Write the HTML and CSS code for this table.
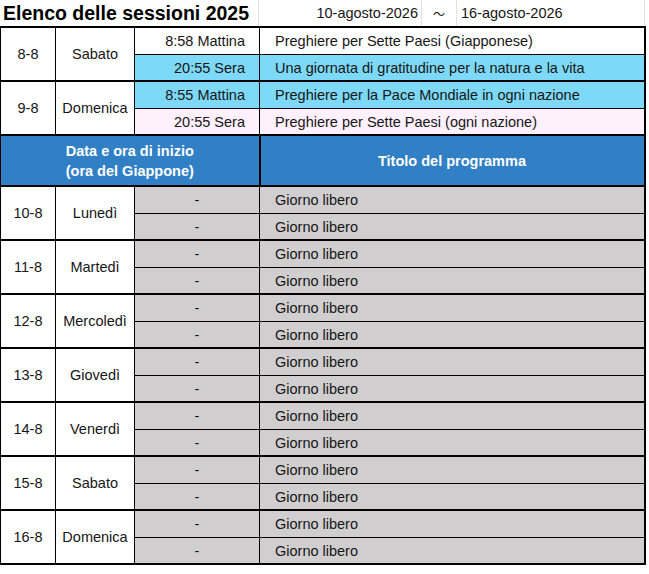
FILE: index.html
```html
<!DOCTYPE html>
<html lang="it">
<head>
<meta charset="utf-8">
<title>Elenco delle sessioni 2025</title>
<link rel="stylesheet" href="styles.css">
</head>
<body>
<div class="sheet">
  <div class="topbar">
    <div class="tb-title">Elenco delle sessioni 2025</div>
    <div class="tb-from">10-agosto-2026</div>
    <div class="tb-tilde">～</div>
    <div class="tb-to">16-agosto-2026</div>
  </div>
  <table class="sched">
    <colgroup>
      <col class="c-date"><col class="c-day"><col class="c-time"><col class="c-title">
    </colgroup>
    <tbody>
      <tr class="first">
        <td class="date" rowspan="2">8-8</td>
        <td class="day" rowspan="2">Sabato</td>
        <td class="time">8:58 Mattina</td>
        <td class="title">Preghiere per Sette Paesi (Giapponese)</td>
      </tr>
      <tr class="grp-end cyan">
        <td class="time">20:55 Sera</td>
        <td class="title">Una giornata di gratitudine per la natura e la vita</td>
      </tr>
      <tr class="cyan">
        <td class="date" rowspan="2">9-8</td>
        <td class="day" rowspan="2">Domenica</td>
        <td class="time">8:55 Mattina</td>
        <td class="title">Preghiere per la Pace Mondiale in ogni nazione</td>
      </tr>
      <tr class="grp-end pink">
        <td class="time">20:55 Sera</td>
        <td class="title">Preghiere per Sette Paesi (ogni nazione)</td>
      </tr>
      <tr class="head">
        <th colspan="3">Data e ora di inizio<br>(ora del Giappone)</th>
        <th>Titolo del programma</th>
      </tr>
      <tr>
        <td class="date" rowspan="2">10-8</td>
        <td class="day" rowspan="2">Lunedì</td>
        <td class="time free">-</td>
        <td class="title free">Giorno libero</td>
      </tr>
      <tr class="grp-end">
        <td class="time free">-</td>
        <td class="title free">Giorno libero</td>
      </tr>
      <tr>
        <td class="date" rowspan="2">11-8</td>
        <td class="day" rowspan="2">Martedì</td>
        <td class="time free">-</td>
        <td class="title free">Giorno libero</td>
      </tr>
      <tr class="grp-end">
        <td class="time free">-</td>
        <td class="title free">Giorno libero</td>
      </tr>
      <tr>
        <td class="date" rowspan="2">12-8</td>
        <td class="day" rowspan="2">Mercoledì</td>
        <td class="time free">-</td>
        <td class="title free">Giorno libero</td>
      </tr>
      <tr class="grp-end">
        <td class="time free">-</td>
        <td class="title free">Giorno libero</td>
      </tr>
      <tr>
        <td class="date" rowspan="2">13-8</td>
        <td class="day" rowspan="2">Giovedì</td>
        <td class="time free">-</td>
        <td class="title free">Giorno libero</td>
      </tr>
      <tr class="grp-end">
        <td class="time free">-</td>
        <td class="title free">Giorno libero</td>
      </tr>
      <tr>
        <td class="date" rowspan="2">14-8</td>
        <td class="day" rowspan="2">Venerdì</td>
        <td class="time free">-</td>
        <td class="title free">Giorno libero</td>
      </tr>
      <tr class="grp-end">
        <td class="time free">-</td>
        <td class="title free">Giorno libero</td>
      </tr>
      <tr>
        <td class="date" rowspan="2">15-8</td>
        <td class="day" rowspan="2">Sabato</td>
        <td class="time free">-</td>
        <td class="title free">Giorno libero</td>
      </tr>
      <tr class="grp-end">
        <td class="time free">-</td>
        <td class="title free">Giorno libero</td>
      </tr>
      <tr>
        <td class="date" rowspan="2">16-8</td>
        <td class="day" rowspan="2">Domenica</td>
        <td class="time free">-</td>
        <td class="title free">Giorno libero</td>
      </tr>
      <tr class="grp-end last">
        <td class="time free">-</td>
        <td class="title free">Giorno libero</td>
      </tr>
    </tbody>
  </table>
</div>
</body>
</html>
```

FILE: styles.css
```css
html, body {
  margin: 0;
  padding: 0;
  background: #ffffff;
}

body {
  font-family: "Liberation Sans", Arial, sans-serif;
  font-size: 14.5px;
  color: #161616;
}

.sheet {
  width: 645px;
}

.topbar {
  display: flex;
  height: 26px;
  align-items: stretch;
}

.topbar > div {
  display: flex;
  align-items: center;
  border-right: 1px solid #e2e2e2;
  box-sizing: border-box;
}

.tb-title {
  width: 259px;
  padding-left: 3px;
  font-size: 19.5px;
  font-weight: bold;
  color: #000;
}

.tb-from {
  width: 163px;
  justify-content: flex-end;
  padding-right: 3px;
}

.tb-tilde {
  width: 35px;
  justify-content: center;
  font-family: "Noto Sans CJK JP", sans-serif;
  font-size: 12px;
}

.tb-to {
  width: 188px;
  padding-left: 4px;
}

.sched {
  border-collapse: collapse;
  table-layout: fixed;
  width: 644px;
  border-top: 2px solid #000;
  border-left: 1px solid #000;
  border-right: 2px solid #000;
}

.c-date { width: 55px; }
.c-day { width: 79px; }
.c-time { width: 125px; }
.c-title { width: 385px; }

.sched td,
.sched th {
  border: 1px solid #000;
  padding: 0;
  height: 26px;
  vertical-align: middle;
  white-space: nowrap;
  line-height: 16px;
}

.sched tr.grp-end td {
  height: 25px;
}

.sched td.date,
.sched td.day {
  text-align: center;
  background: #ffffff;
}

.sched td.time {
  text-align: right;
  padding-right: 14px;
}

.sched td.title {
  text-align: left;
  padding-left: 15px;
}

.sched td.free {
  background: #d0cece;
}

.sched td.time.free {
  text-align: center;
  padding-right: 0;
}

.sched tr.cyan td.time,
.sched tr.cyan td.title {
  background: #7dd9f7;
}

.sched tr.pink td.time,
.sched tr.pink td.title {
  background: #fef0fc;
}

.sched tr.grp-end td,
.sched td.date,
.sched td.day {
  border-bottom: 2px solid #000;
}

.sched tr.head th {
  height: 49px;
  background: #3180c6;
  color: #ffffff;
  font-weight: bold;
  line-height: 20px;
  text-align: center;
  border-top: 2px solid #000;
  border-bottom: 2px solid #000;
  border-right: 2px solid #000;
}

.sched tr.last td {
  border-bottom: 2px solid #000;
}
```
